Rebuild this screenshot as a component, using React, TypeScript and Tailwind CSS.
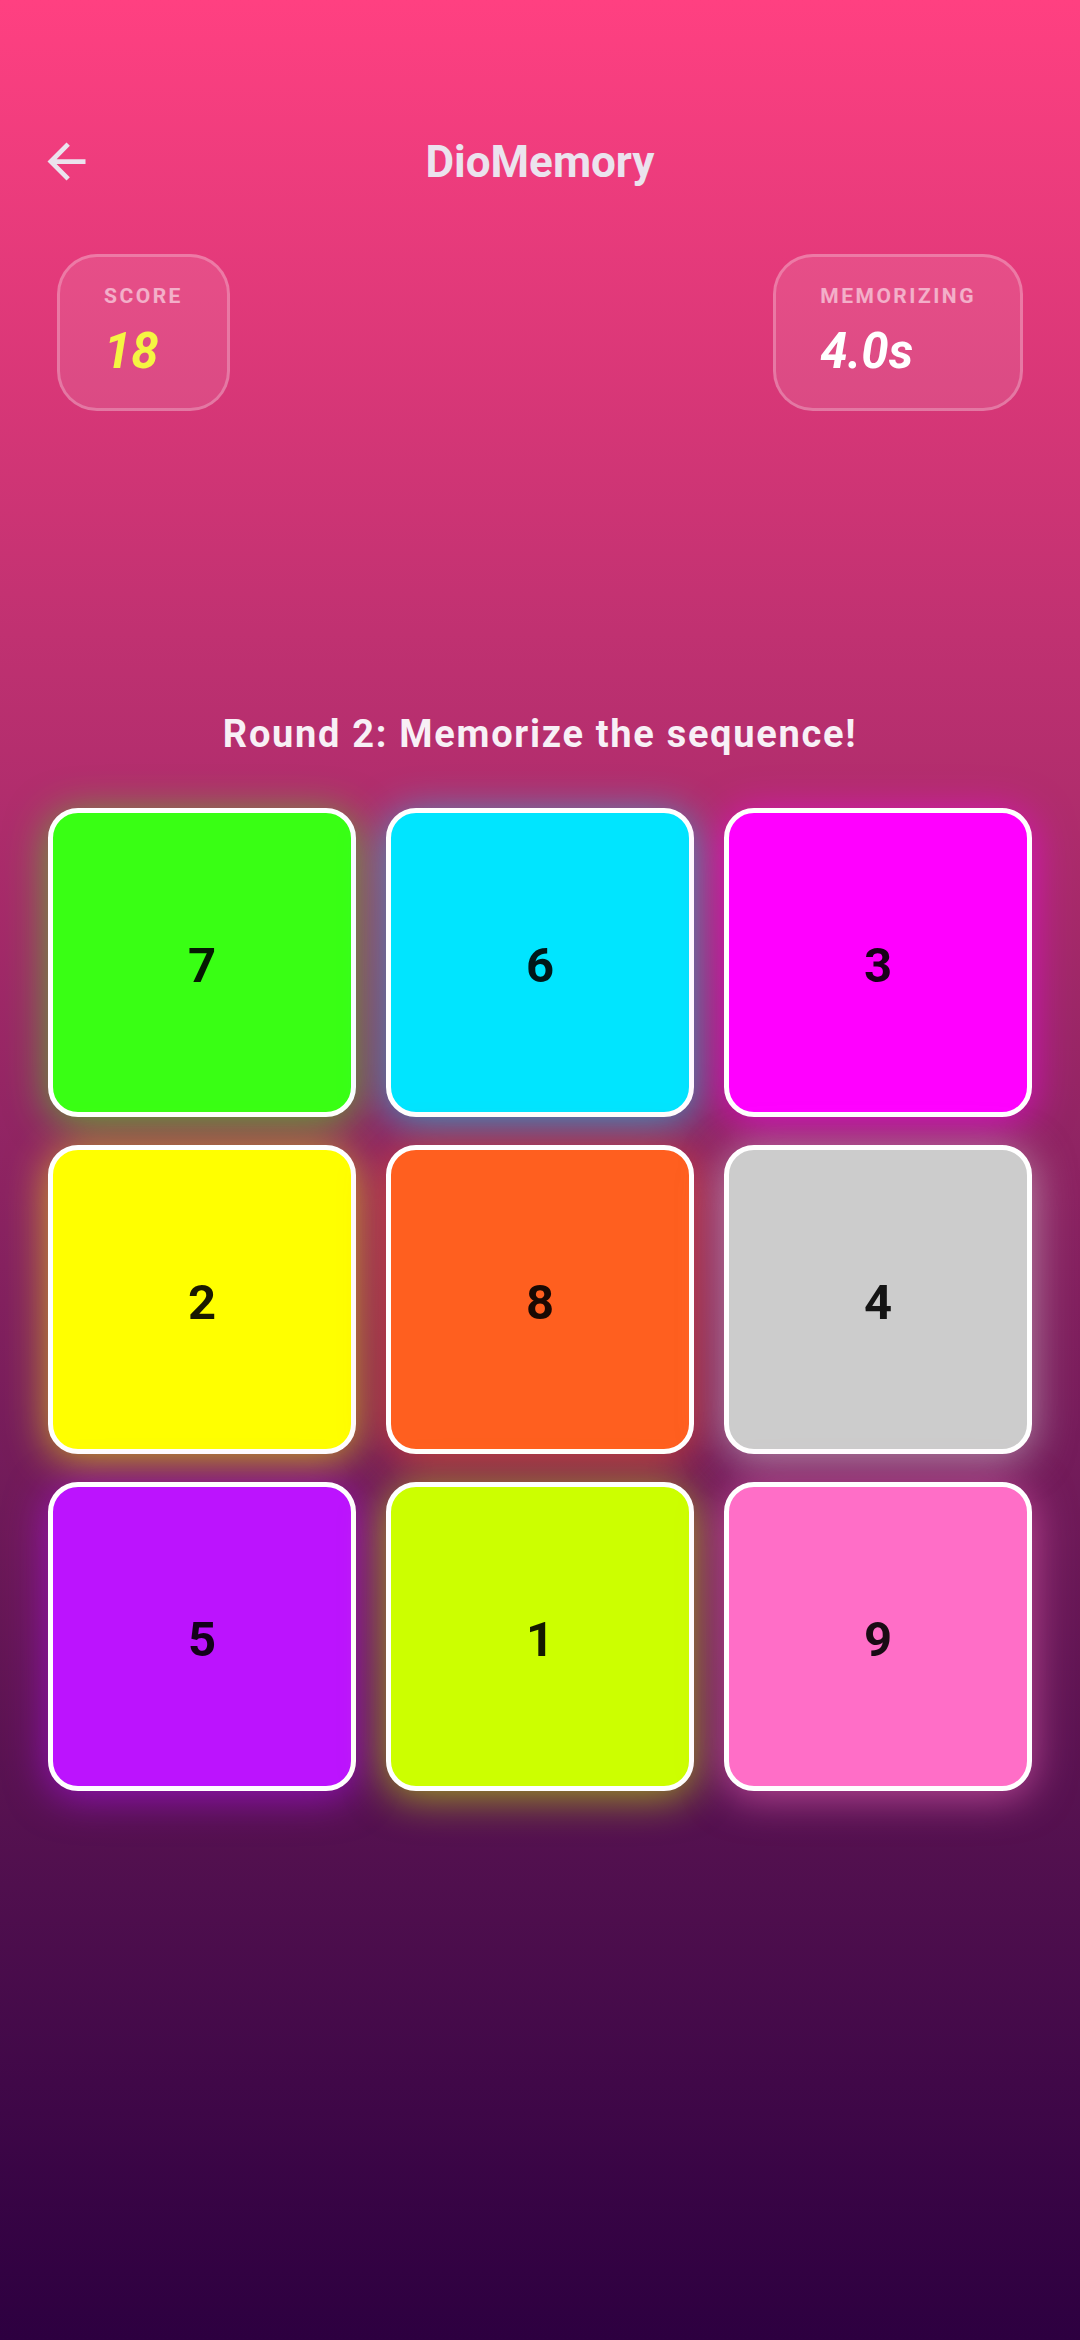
import React from 'react';

const tiles = [
  { n: 7, cls: 'bg-[#39ff14] shadow-[0_6px_42px_rgba(57,255,20,0.6)]' },
  { n: 6, cls: 'bg-[#00e5ff] shadow-[0_6px_42px_rgba(0,229,255,0.6)]' },
  { n: 3, cls: 'bg-[#ff00ff] shadow-[0_6px_42px_rgba(255,0,255,0.6)]' },
  { n: 2, cls: 'bg-[#ffff00] shadow-[0_6px_42px_rgba(255,255,0,0.6)]' },
  { n: 8, cls: 'bg-[#ff5f1f] shadow-[0_6px_42px_rgba(255,95,31,0.6)]' },
  { n: 4, cls: 'bg-[#cccccc] shadow-[0_6px_42px_rgba(230,230,230,0.55)]' },
  { n: 5, cls: 'bg-[#bc13fe] shadow-[0_6px_42px_rgba(188,19,254,0.6)]' },
  { n: 1, cls: 'bg-[#ccff00] shadow-[0_6px_42px_rgba(204,255,0,0.6)]' },
  { n: 9, cls: 'bg-[#ff6ec7] shadow-[0_6px_42px_rgba(255,110,199,0.6)]' },
];

function StatCard({ label, value, valueClass }: { label: string; value: string; valueClass: string }) {
  return (
    <div className="flex flex-col rounded-[40px] border-[3px] border-white/25 bg-white/10 px-[44px] pt-[27px] pb-[28px]">
      <span className="text-[21px] leading-[25px] font-bold tracking-[2.5px] text-white/55">{label}</span>
      <span className={`mt-[14px] text-[49px] leading-[57px] font-bold italic ${valueClass}`}>{value}</span>
    </div>
  );
}

export default function App() {
  return (
    <div
      className="w-[1080px] h-[2340px] bg-gradient-to-b from-[#ff4081] to-[#2d0040] flex flex-col"
      style={{ fontFamily: 'Roboto, "Noto Sans", sans-serif' }}
    >
      {/* header */}
      <div className="relative mt-[130px] h-[64px] flex items-center justify-center">
        <svg className="absolute left-[38px] top-[3px]" width="57" height="57" viewBox="0 0 24 24">
          <path d="M20 11H7.83l5.59-5.59L12 4l-8 8 8 8 1.41-1.41L7.83 13H20v-2z" fill="#ebe3ee" />
        </svg>
        <h1 className="text-[44px] leading-[50px] font-bold text-[#ebe3ee]">DioMemory</h1>
      </div>

      {/* stats */}
      <div className="mt-[60px] px-[57px] flex justify-between">
        <StatCard label="SCORE" value="18" valueClass="text-[#f5f542]" />
        <StatCard label="MEMORIZING" value="4.0s" valueClass="text-white" />
      </div>

      <p className="mt-[301px] text-center text-[38px] leading-[44px] font-bold tracking-[1.7px] text-[#f8f0f6]">
        Round 2: Memorize the sequence!
      </p>

      {/* grid */}
      <div className="mt-[52px] px-[48px] grid grid-cols-3 gap-x-[30px] gap-y-[28px]">
        {tiles.map((t) => (
          <div
            key={t.n}
            className={`h-[309px] rounded-[30px] border-[5px] border-white flex items-center justify-center pt-[6px] ${t.cls}`}
          >
            <span className="text-[49px] font-bold text-black/90">{t.n}</span>
          </div>
        ))}
      </div>
    </div>
  );
}
